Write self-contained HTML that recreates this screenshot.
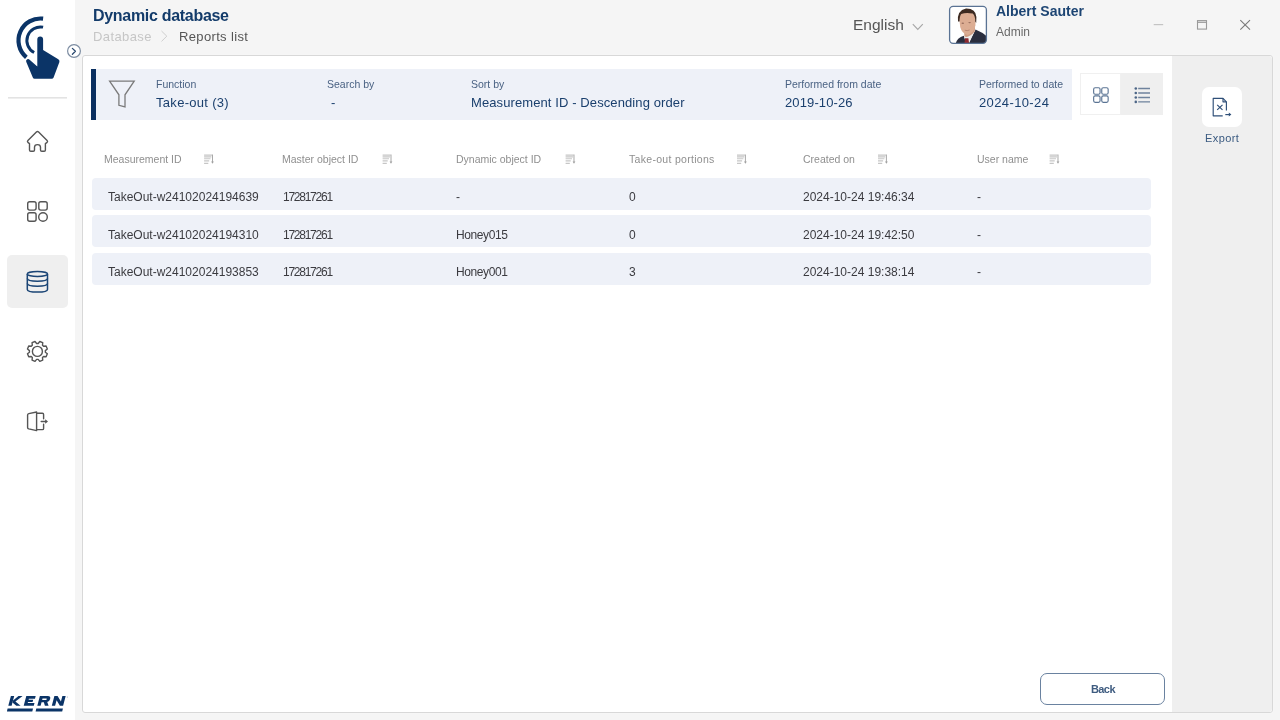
<!DOCTYPE html>
<html><head><meta charset="utf-8">
<style>
*{margin:0;padding:0;box-sizing:border-box}
html,body{width:1280px;height:720px;overflow:hidden;background:#f5f5f5;font-family:"Liberation Sans",sans-serif}
.abs{position:absolute}
.t{position:absolute;white-space:nowrap;line-height:1;will-change:transform}
#side{position:absolute;left:0;top:0;width:75px;height:720px;background:#fff}
#card{position:absolute;left:82px;top:55px;width:1191px;height:658px;background:#fff;border:1px solid #d8d8d8;border-radius:3px;box-shadow:0 0 2px rgba(255,255,255,.6)}
#rpanel{position:absolute;left:1172px;top:56px;width:100px;height:656px;background:#efefef;border-radius:0 3px 3px 0}
.row{position:absolute;left:92px;width:1059px;height:32px;background:#eef1f8;border-radius:4px}
.hd{font-size:10.5px;color:#8f8f8f}
.cell{font-size:12px;color:#3b3b40}
</style></head><body>
<div id="side"></div>
<svg class="abs" style="left:0;top:0" width="75" height="720" viewBox="0 0 75 720">
<g fill="none" stroke="#0b3467" stroke-linecap="butt">
<path d="M43.10 18.65 A22.00 22.00 0 0 0 26.36 57.35" stroke-width="4.2"/>
<path d="M43.10 27.15 A13.60 13.60 0 0 0 34.12 52.51" stroke-width="3"/>
</g>
<path fill="#0b3467" d="M37.3 39.5 A2.9 2.9 0 0 1 43.1 39.5 L43.1 50 L58.3 59.2 Q59.9 60.3 59.4 62 L53.6 77.4 Q53.1 78.8 51.7 78.8 L34.6 78.8 Q33.3 78.8 32.8 77.5 L26.2 61.8 Q25.6 59.9 27.3 59.2 Q28.6 58.8 29.6 59.7 L37.3 66.5 Z"/>
<rect x="8" y="97" width="59" height="1.6" fill="#e3e3e3"/>
<g fill="none" stroke="#555" stroke-width="1.4" stroke-linejoin="round" stroke-linecap="round">
<path d="M29.5 143.6 L27.9 142.4 Q27 141.4 27.9 140.5 L36.4 132.1 Q37.5 131.1 38.6 132.1 L47.1 140.5 Q48 141.4 47.1 142.4 L45.4 143.6 L45.4 150 Q45.4 151.3 44.1 151.3 L41.8 151.3 Q40.5 151.3 40.5 150 L40.5 147.3 Q40.5 144.6 37.5 144.6 Q34.5 144.6 34.5 147.3 L34.5 150 Q34.5 151.3 33.2 151.3 L30.8 151.3 Q29.5 151.3 29.5 150 Z"/>
<rect x="27.7" y="201.7" width="8.4" height="8.4" rx="2"/>
<rect x="38.8" y="201.7" width="8.4" height="8.4" rx="2"/>
<rect x="27.7" y="212.8" width="8.4" height="8.4" rx="2"/>
<circle cx="43" cy="217" r="4.3"/>
<path d="M38.17 343.44 L39.78 341.48 L42.73 342.70 L42.49 345.23 L43.57 346.31 L46.10 346.07 L47.32 349.02 L45.36 350.63 L45.36 352.17 L47.32 353.78 L46.10 356.73 L43.57 356.49 L42.49 357.57 L42.73 360.10 L39.78 361.32 L38.17 359.36 L36.63 359.36 L35.02 361.32 L32.07 360.10 L32.31 357.57 L31.23 356.49 L28.70 356.73 L27.48 353.78 L29.44 352.17 L29.44 350.63 L27.48 349.02 L28.70 346.07 L31.23 346.31 L32.31 345.23 L32.07 342.70 L35.02 341.48 L36.63 343.44Z"/>
<circle cx="37.4" cy="351.4" r="5"/>
<path d="M36.6 412 L28.8 413.6 Q27.6 413.9 27.6 415.1 L27.6 427.4 Q27.6 428.6 28.8 428.9 L36.6 430.6 Z"/>
<path d="M36.8 413.2 L42.4 413.2 Q43.6 413.2 43.6 414.4 L43.6 418.8 M43.6 424.2 L43.6 428.4 Q43.6 429.6 42.4 429.6 L36.8 429.6"/>
<path d="M41.2 421.5 L46 421.5"/>
</g>
<path d="M45.2 419.3 L48 421.5 L45.2 423.7 Z" fill="#555"/>
<rect x="7" y="255" width="61" height="53" rx="5" fill="#efefef"/>
<g fill="none" stroke="#1b4576" stroke-width="1.5">
<ellipse cx="37.4" cy="274" rx="10.1" ry="2.4"/>
<path d="M27.3 274 L27.3 289.4 Q27.3 292 37.4 292 Q47.5 292 47.5 289.4 L47.5 274"/>
<path d="M27.3 278.6 Q27.3 281.2 37.4 281.2 Q47.5 281.2 47.5 278.6"/>
<path d="M27.3 283.6 Q27.3 286.2 37.4 286.2 Q47.5 286.2 47.5 283.6"/>
</g>
</svg>
<div id="card"></div>
<div id="rpanel"></div>

<!-- header -->
<div class="t" style="left:92.5px;top:8px;font-size:16px;font-weight:bold;color:#133b6a;letter-spacing:-0.3px">Dynamic database</div>
<div class="t" style="left:92.5px;top:30px;font-size:13px;color:#c6c6c6;letter-spacing:0.4px">Database</div>
<div class="t" style="left:179px;top:30px;font-size:13px;color:#555;letter-spacing:0.35px">Reports list</div>

<!-- filter bar -->
<div class="abs" style="left:91px;top:69px;width:981px;height:51px;background:#eef1f8"></div>
<div class="abs" style="left:91px;top:69px;width:5px;height:51px;background:#0a2f60"></div>

<div class="t" style="left:156px;top:78.5px;font-size:10.5px;color:#4a6283">Function</div>
<div class="t" style="left:156px;top:96px;font-size:13px;color:#1a3f6d;letter-spacing:0.3px">Take-out (3)</div>
<div class="t" style="left:327px;top:78.5px;font-size:10.5px;color:#4a6283">Search by</div>
<div class="t" style="left:331px;top:96px;font-size:13px;color:#1a3f6d">-</div>
<div class="t" style="left:471px;top:78.5px;font-size:10.5px;color:#4a6283">Sort by</div>
<div class="t" style="left:471px;top:96px;font-size:13px;color:#1a3f6d;letter-spacing:0.1px">Measurement ID - Descending order</div>
<div class="t" style="left:784.5px;top:78.5px;font-size:10.5px;color:#4a6283">Performed from date</div>
<div class="t" style="left:784.5px;top:96px;font-size:13px;color:#1a3f6d;letter-spacing:0.12px">2019-10-26</div>
<div class="t" style="left:979px;top:78.5px;font-size:10.5px;color:#4a6283">Performed to date</div>
<div class="t" style="left:979px;top:96px;font-size:13px;color:#1a3f6d;letter-spacing:0.38px">2024-10-24</div>

<!-- table header -->
<div class="t hd" style="left:104px;top:153.5px">Measurement ID</div>
<div class="t hd" style="left:282px;top:153.5px">Master object ID</div>
<div class="t hd" style="left:456px;top:153.5px">Dynamic object ID</div>
<div class="t hd" style="left:629px;top:153.5px;letter-spacing:0.3px">Take-out portions</div>
<div class="t hd" style="left:803px;top:153.5px">Created on</div>
<div class="t hd" style="left:977px;top:153.5px">User name</div>

<div class="row" style="top:178px"></div>
<div class="row" style="top:215px"></div>
<div class="row" style="top:253px"></div>

<div class="t cell" style="left:108px;top:191px">TakeOut-w24102024194639</div>
<div class="t cell" style="left:282.5px;top:191px;letter-spacing:-1.25px">172817261</div>
<div class="t cell" style="left:456px;top:191px">-</div>
<div class="t cell" style="left:629px;top:191px">0</div>
<div class="t cell" style="left:803px;top:191px">2024-10-24 19:46:34</div>
<div class="t cell" style="left:977px;top:191px">-</div>

<div class="t cell" style="left:108px;top:229px">TakeOut-w24102024194310</div>
<div class="t cell" style="left:282.5px;top:229px;letter-spacing:-1.25px">172817261</div>
<div class="t cell" style="left:456px;top:229px;letter-spacing:-0.4px">Honey015</div>
<div class="t cell" style="left:629px;top:229px">0</div>
<div class="t cell" style="left:803px;top:229px">2024-10-24 19:42:50</div>
<div class="t cell" style="left:977px;top:229px">-</div>

<div class="t cell" style="left:108px;top:266px">TakeOut-w24102024193853</div>
<div class="t cell" style="left:282.5px;top:266px;letter-spacing:-1.25px">172817261</div>
<div class="t cell" style="left:456px;top:266px;letter-spacing:-0.4px">Honey001</div>
<div class="t cell" style="left:629px;top:266px">3</div>
<div class="t cell" style="left:803px;top:266px">2024-10-24 19:38:14</div>
<div class="t cell" style="left:977px;top:266px">-</div>

<!-- back button -->
<div class="abs" style="left:1040px;top:673px;width:125px;height:32px;border:1.6px solid #6a82a0;border-radius:7px;background:#fff"></div>
<div class="t" style="left:1090.5px;top:683.6px;font-size:11px;font-weight:bold;color:#3f5c80;letter-spacing:-0.6px">Back</div>

<!-- export -->
<div class="abs" style="left:1202px;top:87px;width:40px;height:40px;background:#fff;border-radius:7px"></div>
<div class="t" style="left:1204.5px;top:132.7px;font-size:11px;color:#3a5a80;letter-spacing:0.4px">Export</div>


<!-- sidebar toggle circle -->
<svg class="abs" style="left:60px;top:37px" width="30" height="30" viewBox="60 37 30 30">
<circle cx="74" cy="51" r="6.4" fill="#fff" stroke="#7d8da2" stroke-width="1.2"/>
<path d="M72.4 48.4 L75.4 51.3 L72.4 54.2" fill="none" stroke="#2b4a70" stroke-width="1.3" stroke-linecap="round" stroke-linejoin="round"/>
</svg>
<!-- KERN logo -->
<svg class="abs" style="left:0;top:680px" width="75" height="40" viewBox="0 680 75 40">
<g fill="#0b3467" transform="matrix(1,0,-0.27,1,190.54,0)">
<path d="M8.3 696.1 H11.6 V705.7 H8.3 Z"/>
<path d="M11.6 700.4 L15.9 696.1 H20.0 L14.3 701.6 L20.6 705.7 H16.3 L11.6 702.6 Z"/>
<path d="M23.7 696.1 H33.1 V698.7 H27.0 V699.7 H31.6 V702.1 H27.0 V703.1 H33.8 V705.7 H23.7 Z"/>
<path d="M37.3 696.1 H45.2 Q48.3 696.1 48.3 698.9 Q48.3 701.3 46.2 701.9 L48.6 705.7 H44.9 L42.9 702.2 H40.6 V705.7 H37.3 Z M40.6 698.6 V699.9 H44.4 Q45.0 699.9 45.0 699.25 Q45.0 698.6 44.4 698.6 Z"/>
<path d="M51.8 696.1 H55.0 L59.8 701.6 V696.1 H63.1 V705.7 H59.9 L55.1 700.2 V705.7 H51.8 Z"/>
</g>
<circle cx="67.3" cy="696.9" r="0.5" fill="#0b3467" opacity=".5"/>
<path d="M7.6 708.6 H33.0 L32.3 711.5 H6.9 Z M36.3 708.6 H62.9 L62.2 711.5 H35.6 Z" fill="#0b3467"/>
</svg>
<!-- window controls -->
<svg class="abs" style="left:1140px;top:10px" width="130" height="30" viewBox="1140 10 130 30">
<path d="M1153.7 24.6 H1163.2" stroke="#c4c4c4" stroke-width="1.2"/>
<rect x="1197.5" y="20.6" width="9" height="8.5" fill="none" stroke="#9a9a9a" stroke-width="1.1"/>
<path d="M1197.5 22.3 H1206.5" stroke="#9a9a9a" stroke-width="1.2"/>
<path d="M1240.3 20.2 L1250 29.6 M1250 20.2 L1240.3 29.6" stroke="#7a7a7a" stroke-width="1.1"/>
</svg>
<!-- English -->
<div class="t" style="left:853px;top:17.4px;font-size:15.5px;color:#555">English</div>
<svg class="abs" style="left:905px;top:15px" width="25" height="20" viewBox="905 15 25 20">
<path d="M912.8 24.2 L917.8 29.5 L922.8 24.2" fill="none" stroke="#a6a6a6" stroke-width="1.1"/>
</svg>
<!-- avatar -->
<svg class="abs" style="left:945px;top:2px" width="46" height="46" viewBox="945 2 46 46">
<defs><clipPath id="avc"><rect x="949.6" y="6.4" width="36.8" height="36.9" rx="3.5"/></clipPath></defs>
<rect x="949.6" y="6.4" width="36.8" height="36.9" rx="3.5" fill="#fff"/>
<g clip-path="url(#avc)">
<path d="M955.5 44 Q957 37.8 963.8 35.8 L967 44 Z" fill="#2a2e3e"/>
<path d="M975.5 29.5 Q983 32.5 987.5 37 L987.5 44 L968.3 44 Z" fill="#2a2e3e"/>
<path d="M963.8 35.8 L966.2 44 L968.6 44 L975.5 29.5 L973 31.5 Z" fill="#efeeec"/>
<path d="M964.3 30 L964.3 36.3 Q968.2 38.8 974.8 31.5 L975 27 Z" fill="#cf9d84"/>
<path d="M959.2 17.5 Q959.5 12 966.5 11.5 Q975 11.8 975.6 18.5 L975.4 25.5 Q974 32.8 967.6 35 Q962 33.8 960.2 27 Z" fill="#dcad93"/>
<ellipse cx="962.8" cy="23.2" rx="1.3" ry="0.7" fill="#9b6f5e"/>
<ellipse cx="969.6" cy="22.6" rx="1.3" ry="0.7" fill="#9b6f5e"/>
<path d="M964.8 30.2 Q967.2 31.2 969.6 30" stroke="#b07a6a" stroke-width="0.8" fill="none"/>
<path d="M958 21.5 Q956.8 10.5 966 8.5 Q975.8 8.3 976.4 17 L976.2 23 L975.2 21.5 Q975.3 15.6 972.6 13.6 Q966 12.4 961.2 14 Q959.6 16 959.6 21.5 Z" fill="#3d2b22"/>
<path d="M965 38.2 L968.4 38.2 L969.2 44 L964.4 44 Z" fill="#8c2a30"/>
</g>
<rect x="949.6" y="6.4" width="36.8" height="36.9" rx="3.5" fill="none" stroke="#5a7394" stroke-width="1.3"/>
</svg>
<div class="t" style="left:996px;top:4.4px;font-size:14px;font-weight:bold;color:#1d4573">Albert Sauter</div>
<div class="t" style="left:996px;top:26.4px;font-size:12px;color:#6a6a6a">Admin</div>
<!-- breadcrumb chevron -->
<svg class="abs" style="left:155px;top:28px" width="20" height="16" viewBox="155 28 20 16">
<path d="M161.5 31 L166.8 36.2 L161.5 41.4" fill="none" stroke="#cfcfcf" stroke-width="1"/>
</svg>
<!-- funnel -->
<svg class="abs" style="left:100px;top:72px" width="45" height="42" viewBox="100 72 45 42">
<path d="M109.6 81.1 H134.2 L125 94.8 V107 L118.9 105.3 V94.8 Z" fill="none" stroke="#7a7a7a" stroke-width="1.3" stroke-linejoin="miter"/>
</svg>
<!-- view toggle -->
<div class="abs" style="left:1080px;top:73px;width:41px;height:42px;background:#fff;border:1px solid #f0f0f0"></div>
<div class="abs" style="left:1121px;top:73px;width:42px;height:42px;background:#efefef"></div>
<svg class="abs" style="left:1085px;top:80px" width="75" height="30" viewBox="1085 80 75 30">
<g fill="none" stroke="#5b7494" stroke-width="1.15">
<rect x="1093.65" y="87.75" width="6.4" height="6.5" rx="1.5"/>
<rect x="1101.75" y="87.75" width="6.4" height="6.5" rx="1.5"/>
<rect x="1093.65" y="95.85" width="6.4" height="6.5" rx="1.5"/>
<rect x="1101.75" y="95.85" width="6.4" height="6.5" rx="1.5"/>
</g>
<g stroke="#6f839d" stroke-width="1.3">
<path d="M1138.2 88.5 H1150 M1138.2 93 H1150 M1138.2 97.5 H1150 M1138.2 101.9 H1150"/>
</g>
<g fill="#4d6687">
<circle cx="1135.8" cy="88.5" r="1.3"/><circle cx="1135.8" cy="93" r="1.3"/><circle cx="1135.8" cy="97.5" r="1.3"/><circle cx="1135.8" cy="101.9" r="1.3"/>
</g>
</svg>
<!-- export icon -->
<svg class="abs" style="left:1205px;top:92px" width="32" height="30" viewBox="1205 92 32 30">
<g fill="none" stroke="#2f4f78" stroke-width="1.15" stroke-linejoin="round">
<path d="M1222.7 115.8 H1213.2 V98.3 H1223 L1226.4 101.8 V110.4"/>
<path d="M1223 98.3 V101.8 H1226.4"/>
<path d="M1217.2 104.8 L1222.5 109.9 M1222.5 104.8 L1217.2 109.9"/>
<path d="M1225.3 114.6 H1229.5"/>
</g>
<path d="M1228.8 112.6 L1231.4 114.6 L1228.8 116.6 Z" fill="#2f4f78"/>
</svg>
<!-- sort icons -->
<svg class="abs" style="left:0;top:150px" width="1280" height="20" viewBox="0 150 1280 20">

<g transform="translate(204.1 154.5)">
<path d="M0 0.6 H7.9 M0 2.3 H7.3 M0 4.2 H6.4 M0 6.4 H5.1 M0 8.9 H4.2" fill="none" stroke="#c6c6c6" stroke-width="1.15"/>
<path d="M8.4 0 V7.6" stroke="#a8a8a8" stroke-width="1"/>
<path d="M7 7.1 L8.4 9.2 L9.8 7.1 Z" fill="#a0a0a0"/>
</g>
<g transform="translate(382.6 154.5)">
<path d="M0 0.6 H7.9 M0 2.3 H7.3 M0 4.2 H6.4 M0 6.4 H5.1 M0 8.9 H4.2" fill="none" stroke="#c6c6c6" stroke-width="1.15"/>
<path d="M8.4 0 V7.6" stroke="#a8a8a8" stroke-width="1"/>
<path d="M7 7.1 L8.4 9.2 L9.8 7.1 Z" fill="#a0a0a0"/>
</g>
<g transform="translate(565.6 154.5)">
<path d="M0 0.6 H7.9 M0 2.3 H7.3 M0 4.2 H6.4 M0 6.4 H5.1 M0 8.9 H4.2" fill="none" stroke="#c6c6c6" stroke-width="1.15"/>
<path d="M8.4 0 V7.6" stroke="#a8a8a8" stroke-width="1"/>
<path d="M7 7.1 L8.4 9.2 L9.8 7.1 Z" fill="#a0a0a0"/>
</g>
<g transform="translate(737 154.5)">
<path d="M0 0.6 H7.9 M0 2.3 H7.3 M0 4.2 H6.4 M0 6.4 H5.1 M0 8.9 H4.2" fill="none" stroke="#c6c6c6" stroke-width="1.15"/>
<path d="M8.4 0 V7.6" stroke="#a8a8a8" stroke-width="1"/>
<path d="M7 7.1 L8.4 9.2 L9.8 7.1 Z" fill="#a0a0a0"/>
</g>
<g transform="translate(878 154.5)">
<path d="M0 0.6 H7.9 M0 2.3 H7.3 M0 4.2 H6.4 M0 6.4 H5.1 M0 8.9 H4.2" fill="none" stroke="#c6c6c6" stroke-width="1.15"/>
<path d="M8.4 0 V7.6" stroke="#a8a8a8" stroke-width="1"/>
<path d="M7 7.1 L8.4 9.2 L9.8 7.1 Z" fill="#a0a0a0"/>
</g>
<g transform="translate(1049.6 154.5)">
<path d="M0 0.6 H7.9 M0 2.3 H7.3 M0 4.2 H6.4 M0 6.4 H5.1 M0 8.9 H4.2" fill="none" stroke="#c6c6c6" stroke-width="1.15"/>
<path d="M8.4 0 V7.6" stroke="#a8a8a8" stroke-width="1"/>
<path d="M7 7.1 L8.4 9.2 L9.8 7.1 Z" fill="#a0a0a0"/>
</g>
</svg>
</body></html>
